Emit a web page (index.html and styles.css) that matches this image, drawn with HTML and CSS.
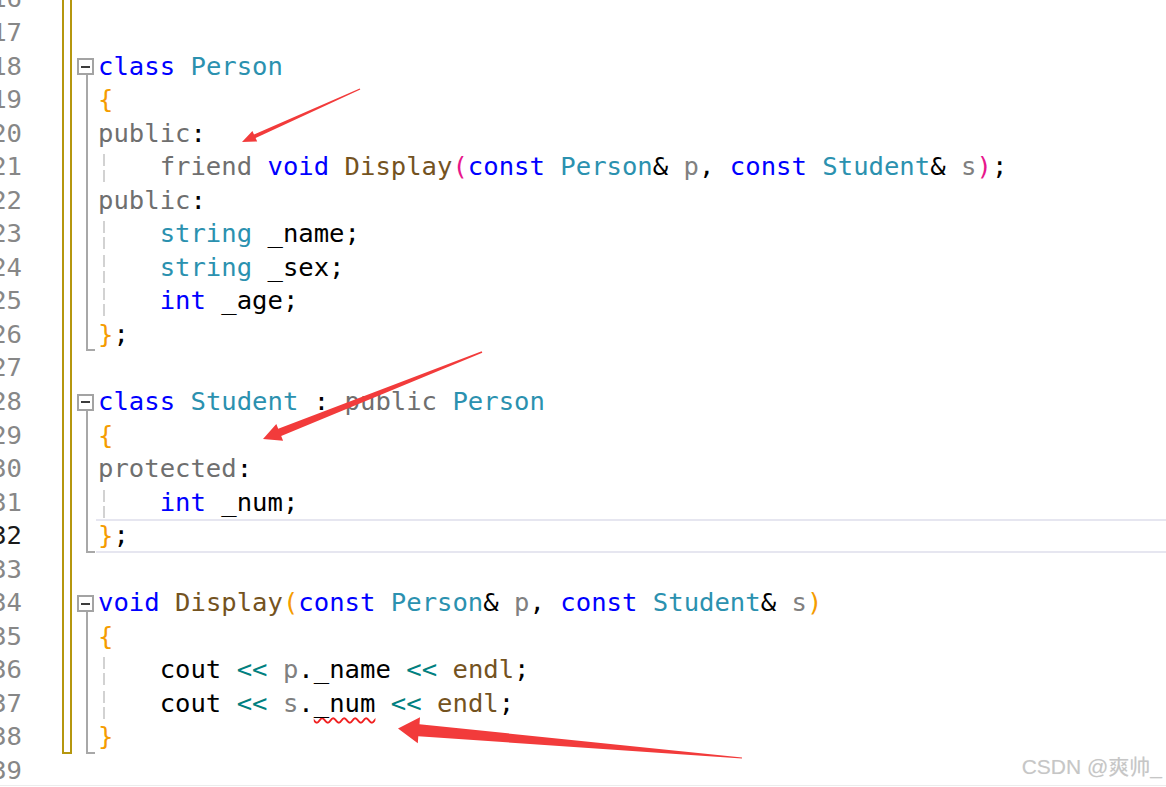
FILE: index.html
```html
<!DOCTYPE html>
<html lang="zh">
<head>
<meta charset="utf-8">
<title>Editor</title>
<link rel="stylesheet" href="styles.css">
</head>
<body>
<div class="window">
  <div class="editor">
    <div class="lines">
      <div class="row"><span class="ln">16</span><span class="chg"></span><span class="fold"></span><span class="code"></span></div>
      <div class="row"><span class="ln">17</span><span class="chg"></span><span class="fold"></span><span class="code"></span></div>
      <div class="row"><span class="ln">18</span><span class="chg"></span><span class="fold start"><span class="fold-box"><span class="minus"></span></span><span class="fold-line"></span></span><span class="code"><span class="k">class</span> <span class="t">Person</span></span></div>
      <div class="row"><span class="ln">19</span><span class="chg"></span><span class="fold"><span class="fold-line"></span></span><span class="code"><span class="b">{</span></span></div>
      <div class="row"><span class="ln">20</span><span class="chg"></span><span class="fold"><span class="fold-line"></span></span><span class="code"><span class="a">public</span>:</span></div>
      <div class="row"><span class="ln">21</span><span class="chg"></span><span class="fold"><span class="fold-line"></span></span><span class="code"><span class="ind"></span><span class="a">friend</span> <span class="k">void</span> <span class="f">Display</span><span class="pk">(</span><span class="k">const</span> <span class="t">Person</span>&amp; <span class="p">p</span>, <span class="k">const</span> <span class="t">Student</span>&amp; <span class="p">s</span><span class="pk">)</span>;</span></div>
      <div class="row"><span class="ln">22</span><span class="chg"></span><span class="fold"><span class="fold-line"></span></span><span class="code"><span class="a">public</span>:</span></div>
      <div class="row"><span class="ln">23</span><span class="chg"></span><span class="fold"><span class="fold-line"></span></span><span class="code"><span class="ind"></span><span class="t">string</span> _name;</span></div>
      <div class="row"><span class="ln">24</span><span class="chg"></span><span class="fold"><span class="fold-line"></span></span><span class="code"><span class="ind"></span><span class="t">string</span> _sex;</span></div>
      <div class="row"><span class="ln">25</span><span class="chg"></span><span class="fold"><span class="fold-line"></span></span><span class="code"><span class="ind"></span><span class="k">int</span> _age;</span></div>
      <div class="row"><span class="ln">26</span><span class="chg"></span><span class="fold"><span class="fold-end"></span></span><span class="code"><span class="b">}</span>;</span></div>
      <div class="row"><span class="ln">27</span><span class="chg"></span><span class="fold"></span><span class="code"></span></div>
      <div class="row"><span class="ln">28</span><span class="chg"></span><span class="fold start"><span class="fold-box"><span class="minus"></span></span><span class="fold-line"></span></span><span class="code"><span class="k">class</span> <span class="t">Student</span> : <span class="a">public</span> <span class="t">Person</span></span></div>
      <div class="row"><span class="ln">29</span><span class="chg"></span><span class="fold"><span class="fold-line"></span></span><span class="code"><span class="b">{</span></span></div>
      <div class="row"><span class="ln">30</span><span class="chg"></span><span class="fold"><span class="fold-line"></span></span><span class="code"><span class="a">protected</span>:</span></div>
      <div class="row"><span class="ln">31</span><span class="chg"></span><span class="fold"><span class="fold-line"></span></span><span class="code"><span class="ind"></span><span class="k">int</span> _num;</span></div>
      <div class="row cur"><span class="ln">32</span><span class="chg"></span><span class="fold"><span class="fold-end"></span></span><span class="code"><span class="b">}</span>;</span></div>
      <div class="row"><span class="ln">33</span><span class="chg"></span><span class="fold"></span><span class="code"></span></div>
      <div class="row"><span class="ln">34</span><span class="chg"></span><span class="fold start"><span class="fold-box"><span class="minus"></span></span><span class="fold-line"></span></span><span class="code"><span class="k">void</span> <span class="f">Display</span><span class="b">(</span><span class="k">const</span> <span class="t">Person</span>&amp; <span class="p">p</span>, <span class="k">const</span> <span class="t">Student</span>&amp; <span class="p">s</span><span class="b">)</span></span></div>
      <div class="row"><span class="ln">35</span><span class="chg"></span><span class="fold"><span class="fold-line"></span></span><span class="code"><span class="b">{</span></span></div>
      <div class="row"><span class="ln">36</span><span class="chg"></span><span class="fold"><span class="fold-line"></span></span><span class="code"><span class="ind"></span>cout <span class="op">&lt;&lt;</span> <span class="p">p</span>._name <span class="op">&lt;&lt;</span> <span class="f">endl</span>;</span></div>
      <div class="row"><span class="ln">37</span><span class="chg"></span><span class="fold"><span class="fold-line"></span></span><span class="code"><span class="ind"></span>cout <span class="op">&lt;&lt;</span> <span class="p">s</span>.<span class="err">_num</span> <span class="op">&lt;&lt;</span> <span class="f">endl</span>;</span></div>
      <div class="row"><span class="ln">38</span><span class="chg last"></span><span class="fold"><span class="fold-end"></span></span><span class="code"><span class="b">}</span></span></div>
      <div class="row"><span class="ln">39</span><span class="chg none"></span><span class="fold"></span><span class="code"></span></div>
    </div>
  </div>
  <div class="hscroll"></div>
  <svg class="marks" width="1166" height="787" viewBox="0 0 1166 787" aria-hidden="true">
    <polygon points="359.7,88.4 254.0,134.4 252.4,131.0 242,142 257.2,141.5 255.6,138.1 360.3,89.6" />
    <polygon points="481.7,351.3 278.2,428.7 276.3,424.0 263,439 283.1,440.8 281.2,436.1 482.3,352.7" />
    <polygon points="742.04,757.4 419.5,724.3 420.0,717.3 398,728.5 417.8,743.3 418.3,736.3 741.96,758.6" />
  </svg>
  <div class="watermark">CSDN @爽帅_</div>
</div>
</body>
</html>
```

FILE: styles.css
```css
html, body {
  margin: 0;
  padding: 0;
  background: #ffffff;
}

.window {
  position: relative;
  width: 1166px;
  height: 787px;
  overflow: hidden;
  display: flex;
  flex-direction: column;
  background: #ffffff;
}

.editor {
  height: 785px;
  overflow: hidden;
  flex: none;
}

.lines {
  margin-top: -17.6px;
  font-family: "DejaVu Sans Mono", "Liberation Mono", monospace;
  font-size: 25.6px;
  color: #000000;
}

.row {
  display: flex;
  height: 33.55px;
  line-height: 33.55px;
}

.ln {
  flex: none;
  width: 40px;
  margin-left: -18px;
  margin-right: 40px;
  text-align: right;
  color: #878787;
}

.row.cur .ln {
  color: #1a1a1a;
}

.chg {
  flex: none;
  width: 10px;
  box-sizing: border-box;
  border-left: 2px solid #b5970f;
  border-right: 2px solid #b5970f;
  margin-right: 5px;
}

.chg.last {
  border-bottom: 2px solid #b5970f;
}

.chg.none {
  border: 0;
}

.fold {
  flex: none;
  width: 19px;
  display: flex;
  flex-direction: column;
  align-items: flex-start;
}

.fold-box {
  flex: none;
  margin-top: 8.8px;
  width: 17px;
  height: 17px;
  box-sizing: border-box;
  border: 2px solid #a3a3a3;
  background: #ffffff;
  display: flex;
  align-items: center;
  justify-content: center;
}

.minus {
  width: 9px;
  height: 2px;
  background: #3c3c3c;
}

.fold-line {
  flex: 1;
  width: 2px;
  margin-left: 9px;
  background: #a8a8a8;
}

.fold-end {
  flex: 1;
  width: 7px;
  margin-left: 9px;
  border-left: 2px solid #a8a8a8;
  border-bottom: 2px solid #a8a8a8;
}

.code {
  flex: 1;
  min-width: 0;
  padding-left: 2px;
  white-space: pre;
}

.row.cur .code {
  box-sizing: border-box;
  border-top: 2px solid #e6e6f0;
  border-bottom: 2px solid #e6e6f0;
  line-height: 29.55px;
}

.ind {
  display: inline-block;
  width: 4ch;
  height: 33.55px;
  vertical-align: top;
  background-image: repeating-linear-gradient(to bottom, #d2d2d2 0 12px, transparent 12px 16px);
  background-size: 2px 100%;
  background-position: 5px 4px;
  background-repeat: no-repeat;
}

.k { color: #0000ff; }
.t { color: #2b91af; }
.f { color: #74531f; }
.a { color: #6f6f6f; }
.p { color: #808080; }
.b { color: #f59c00; }
.pk { color: #e8168c; }
.op { color: #008080; }

.err {
  text-decoration: underline wavy #f02020;
  text-decoration-thickness: 1.5px;
  text-underline-offset: 5px;
  text-decoration-skip-ink: none;
}

.hscroll {
  flex: 1;
  border-top: 1px solid #ececec;
}

.marks {
  position: absolute;
  left: 0;
  top: 0;
  pointer-events: none;
}

.marks polygon {
  fill: #f23b3b;
}

.watermark {
  position: absolute;
  right: 4px;
  top: 754px;
  font-family: "Liberation Sans", "Noto Sans CJK SC", sans-serif;
  font-size: 21px;
  line-height: 26px;
  color: #c6c6c6;
  text-shadow: 0 0 1px rgba(0, 0, 0, 0.08);
}
```
